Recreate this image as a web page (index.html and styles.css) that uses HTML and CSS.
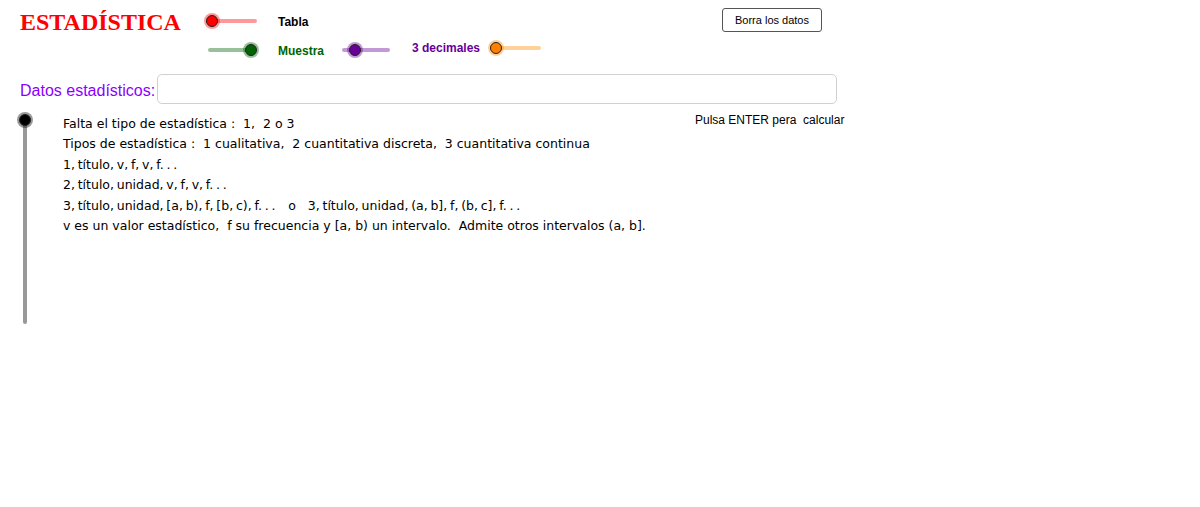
FILE: index.html
```html
<!DOCTYPE html>
<html lang="es">
<head>
<meta charset="utf-8">
<title>Estadística</title>
<link rel="stylesheet" href="styles.css">
</head>
<body>
<div class="canvas">
  <div class="title">ESTADÍSTICA</div>

  <svg class="slider s-red" width="60" height="20" viewBox="0 0 60 20">
    <line x1="10" y1="10" x2="53" y2="10" class="track"/>
    <circle cx="10" cy="10" r="8" class="halo"/>
    <circle cx="10" cy="10" r="5.5" class="knob"/>
  </svg>
  <div class="label l-tabla">Tabla</div>

  <svg class="slider s-green" width="60" height="20" viewBox="0 0 60 20">
    <line x1="8" y1="10" x2="49" y2="10" class="track"/>
    <circle cx="49" cy="10" r="8" class="halo"/>
    <circle cx="49" cy="10" r="5.5" class="knob"/>
  </svg>
  <div class="label l-muestra">Muestra</div>

  <svg class="slider s-purple" width="60" height="20" viewBox="0 0 60 20">
    <line x1="8" y1="10" x2="52" y2="10" class="track"/>
    <circle cx="19" cy="10" r="8" class="halo"/>
    <circle cx="19" cy="10" r="5.5" class="knob"/>
  </svg>
  <div class="label l-dec">3 decimales</div>

  <svg class="slider s-orange" width="60" height="20" viewBox="0 0 60 20">
    <line x1="10" y1="10" x2="53" y2="10" class="track"/>
    <circle cx="10" cy="10" r="8" class="halo"/>
    <circle cx="10" cy="10" r="5.5" class="knob"/>
  </svg>

  <button class="btn">Borra los datos</button>

  <div class="input-row">
    <label class="input-label" for="datos">Datos estadísticos:</label>
    <input id="datos" class="input" type="text">
  </div>

  <div class="hint">Pulsa ENTER pera&nbsp; calcular</div>

  <svg class="vslider" width="20" height="220" viewBox="0 0 20 220">
    <line x1="10" y1="10" x2="10" y2="212" class="track"/>
    <circle cx="10" cy="10" r="8" class="halo"/>
    <circle cx="10" cy="10" r="5.5" class="knob"/>
  </svg>

  <div class="text">
    <p>Falta el tipo de estadística :&nbsp; 1,&nbsp;&nbsp;2 o 3</p>
    <p>Tipos de estadística :&nbsp; 1 cualitativa,&nbsp; 2 cuantitativa discreta,&nbsp; 3 cuantitativa continua</p>
    <p class="math">1, título, v, f, v, f. . .</p>
    <p class="math">2, título, unidad, v, f, v, f. . .</p>
    <p class="math">3, título, unidad, [a, b), f, [b, c), f. . . <span class="gap">o</span>3, título, unidad, (a, b], f, (b, c], f. . .</p>
    <p>v es un valor estadístico,&nbsp; f su frecuencia y [a, b) un intervalo.&nbsp; Admite otros intervalos (a, b].</p>
  </div>
</div>
</body>
</html>
```

FILE: styles.css
```css
html, body {
  margin: 0;
  padding: 0;
  background: #ffffff;
}

.canvas {
  position: relative;
  width: 1200px;
  height: 507px;
  overflow: hidden;
  font-family: "Liberation Sans", Arial, sans-serif;
}

.title {
  position: absolute;
  left: 20px;
  top: 8px;
  font-family: "Liberation Serif", "Times New Roman", serif;
  font-weight: bold;
  font-size: 24px;
  line-height: 28px;
  color: #ff0000;
}

.slider {
  position: absolute;
  overflow: visible;
}
.slider .track, .vslider .track {
  stroke-width: 4;
  stroke-linecap: round;
}
.knob {
  stroke: #222;
  stroke-width: 1;
}

.s-red { left: 202px; top: 11px; }
.s-red .track { stroke: rgba(255, 0, 0, 0.4); }
.s-red .halo { fill: rgba(255, 0, 0, 0.4); }
.s-red .knob { fill: #ff0000; }

.s-green { left: 202px; top: 40px; }
.s-green .track { stroke: rgba(0, 100, 0, 0.4); }
.s-green .halo { fill: rgba(0, 100, 0, 0.4); }
.s-green .knob { fill: #006400; }

.s-purple { left: 336px; top: 40px; }
.s-purple .track { stroke: rgba(102, 0, 153, 0.4); }
.s-purple .halo { fill: rgba(102, 0, 153, 0.4); }
.s-purple .knob { fill: #660099; }

.s-orange { left: 486px; top: 38px; }
.s-orange .track { stroke: rgba(255, 140, 0, 0.4); }
.s-orange .halo { fill: rgba(255, 140, 0, 0.4); }
.s-orange .knob { fill: #ff8000; }

.label {
  position: absolute;
  font-size: 12px;
  font-weight: bold;
  line-height: 14px;
}
.l-tabla { left: 278px; top: 15px; color: #000; }
.l-muestra { left: 278px; top: 44px; color: #006400; }
.l-dec { left: 412px; top: 41px; color: #660099; }

.btn {
  position: absolute;
  left: 722px;
  top: 8px;
  width: 100px;
  height: 24px;
  padding: 0;
  border: 1px solid #555;
  border-radius: 3px;
  background: #fff;
  font-family: "Liberation Sans", Arial, sans-serif;
  font-size: 11px;
  color: #000;
}

.input-row {
  position: absolute;
  left: 20px;
  top: 74px;
  display: flex;
  align-items: center;
  gap: 2px;
}
.input-label {
  font-size: 16px;
  color: #8a00ff;
  padding-top: 3px;
}
.input {
  box-sizing: border-box;
  width: 680px;
  height: 30px;
  border: 1px solid #d0d0d0;
  border-radius: 5px;
  margin: 0;
  padding: 0 6px;
  outline: none;
}

.hint {
  position: absolute;
  left: 695px;
  top: 113px;
  font-size: 12px;
  line-height: 14px;
  color: #000;
}

.vslider {
  position: absolute;
  left: 15px;
  top: 110px;
  overflow: visible;
}
.vslider .track { stroke: rgba(0, 0, 0, 0.4); }
.vslider .halo { fill: rgba(0, 0, 0, 0.4); }
.vslider .knob { fill: #000; }

.text {
  position: absolute;
  left: 63px;
  top: 114px;
  font-family: "DejaVu Sans", sans-serif;
  font-size: 12.5px;
  line-height: 20.4px;
  color: #000;
}
.text p {
  margin: 0;
  white-space: nowrap;
}
.text .math {
  word-spacing: -1.2px;
}
.text .gap {
  display: inline-block;
  margin: 0 12px 0 10px;
}
```
